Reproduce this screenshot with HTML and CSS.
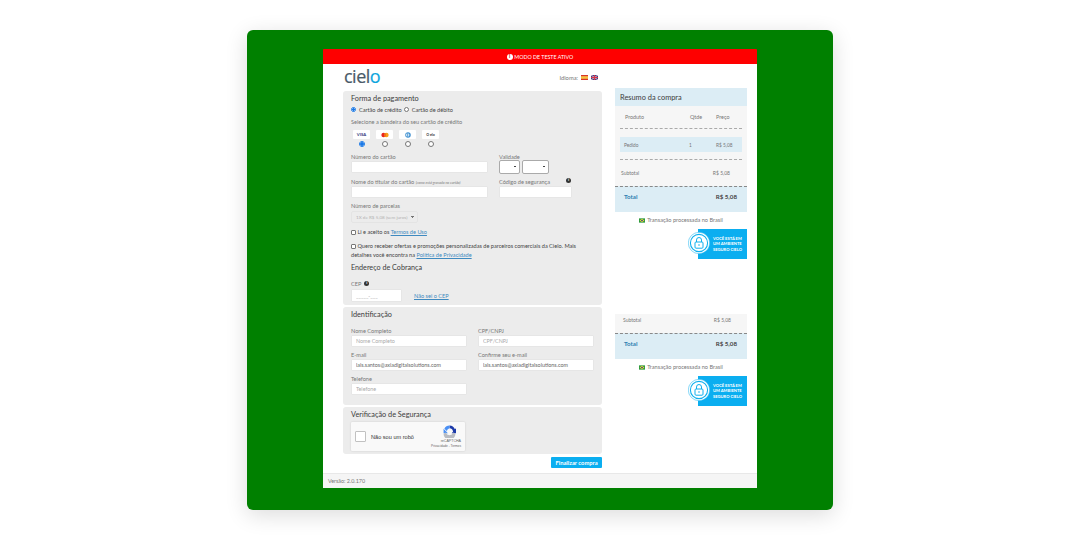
FILE: index.html
```html
<!DOCTYPE html>
<html lang="pt-BR">
<head>
<meta charset="utf-8">
<title>Cielo Checkout</title>
<link rel="stylesheet" href="styles.css">
</head>
<body>
<main class="stage">
  <div class="frame">
    <div class="test-bar"><span class="info-dot white">i</span> MODO DE TESTE ATIVO</div>
    <div class="content">
      <div class="left">
        <header class="top">
          <div class="logo">ciel<span>o</span></div>
          <div class="lang">Idioma:
            <svg class="flag" viewBox="0 0 7 5"><rect width="7" height="5" fill="#d8352a"/><rect y="1.2" width="7" height="2.6" fill="#f5c242"/></svg>
            <svg class="flag" viewBox="0 0 7 5"><rect width="7" height="5" fill="#3a3f85"/><path d="M0 0L7 5M7 0L0 5" stroke="#e6c8d2" stroke-width="1"/><path d="M3.5 0V5M0 2.5H7" stroke="#d8354a" stroke-width="1.2"/></svg>
          </div>
        </header>

        <section class="panel p-pay">
          <h2>Forma de pagamento</h2>
          <div class="pay-type">
            <label><input type="radio" name="t" checked> Cartão de crédito</label>
            <label><input type="radio" name="t"> Cartão de débito</label>
          </div>
          <p class="lbl sel">Selecione a bandeira do seu cartão de crédito</p>
          <div class="brands">
            <label class="brand"><span class="chip"><b class="visa">VISA</b></span><input type="radio" name="b" checked></label>
            <label class="brand"><span class="chip"><svg viewBox="0 0 12 7" class="ico"><circle cx="4.4" cy="3.5" r="2.8" fill="#e8251f"/><circle cx="7.6" cy="3.5" r="2.8" fill="#f79e1b"/><path d="M6 1.2a2.8 2.8 0 010 4.6a2.8 2.8 0 010-4.6z" fill="#f26a1b"/></svg></span><input type="radio" name="b"></label>
            <label class="brand"><span class="chip"><svg viewBox="0 0 12 7" class="ico"><circle cx="6" cy="3.5" r="3.3" fill="#3d8fd0"/><circle cx="5.6" cy="3.5" r="2.1" fill="#d6e8f6"/><rect x="5.2" y="1.3" width=".9" height="4.4" fill="#3d8fd0"/></svg></span><input type="radio" name="b"></label>
            <label class="brand"><span class="chip"><b class="elo">O elo</b></span><input type="radio" name="b"></label>
          </div>

          <div class="card-grid">
            <div class="f-num"><p class="lbl">Número do cartão</p><input class="inp" type="text"></div>
            <div class="f-val"><p class="lbl">Validade</p><div class="sels"><select class="sm"><option></option></select><select class="md"><option></option></select></div></div>
            <div class="f-num"><p class="lbl">Nome do titular do cartão <i>(como está gravado no cartão)</i></p><input class="inp" type="text"></div>
            <div class="f-sec"><p class="lbl between">Código de segurança <span class="info-dot">i</span></p><input class="inp" type="text"></div>
          </div>

          <p class="lbl parc">Número de parcelas</p>
          <select class="parcelas" disabled><option>1X de R$ 5,08 (sem juros)</option></select>
          <label class="check first"><input type="checkbox"> Li e aceito os <a href="#">Termos de Uso</a></label>
          <p class="check second"><input type="checkbox"> Quero receber ofertas e promoções personalizadas de parceiros comerciais da Cielo. Mais detalhes você encontra na <a href="#">Política de Privacidade</a></p>
          <h2 class="addr">Endereço de Cobrança</h2>
          <p class="lbl cep-l">CEP <span class="info-dot">i</span></p>
          <div class="cep-row"><input class="inp cep" type="text" placeholder="_____-___"><a href="#">Não sei o CEP</a></div>
        </section>

        <section class="panel p-id">
          <h2>Identificação</h2>
          <div class="id-grid">
            <div><p class="lbl">Nome Completo</p><input class="inp" placeholder="Nome Completo"></div>
            <div><p class="lbl">CPF/CNPJ</p><input class="inp" placeholder="CPF/CNPJ"></div>
            <div><p class="lbl">E-mail</p><input class="inp" value="lais.santos@axiadigitalsolutions.com"></div>
            <div><p class="lbl">Confirme seu e-mail</p><input class="inp" value="lais.santos@axiadigitalsolutions.com"></div>
            <div><p class="lbl">Telefone</p><input class="inp" placeholder="Telefone"></div>
          </div>
        </section>

        <section class="panel p-sec">
          <h2>Verificação de Segurança</h2>
          <div class="captcha">
            <span class="cap-box"></span>
            <span class="cap-text">Não sou um robô</span>
            <div class="cap-brand">
              <svg viewBox="0 0 24 24" class="cap-ico"><path d="M12 1a11 11 0 0110 7l2-2v9h-8l2.500-2.500A7 7 0 0012 6z" fill="#1c3aa9"/><path d="M12 1A11 11 0 002.500 7L7 11a7 7 0 015-5z" fill="#4a90f5"/><path d="M1 7v8h8l-3-3z" fill="#4a90f5"/><path d="M5 14a7.500 7.500 0 0014 0l4 2a11 11 0 01-22 0z" fill="#b9bcc2"/></svg>
              <span class="cap-name">reCAPTCHA</span>
              <span class="cap-links">Privacidade - Termos</span>
            </div>
          </div>
        </section>

        <div class="actions"><button type="button" class="buy">Finalizar compra</button></div>
      </div>

      <aside class="right">
        <div class="sum-head">Resumo da compra</div>
        <div class="sum-body">
          <div class="tbl-head"><span class="c1">Produto</span><span class="c2">Qtde</span><span class="c3">Preço</span></div>
          <div class="tbl-row"><span class="c1">Pedido</span><span class="c2">1</span><span class="c3">R$ 5,08</span></div>
          <div class="subtotal sub-a"><span>Subtotal</span><span>R$ 5,08</span></div>
        </div>
        <div class="total"><span>Total</span><b>R$ 5,08</b></div>
        <p class="transit"><svg class="br" viewBox="0 0 7 5"><rect width="7" height="5" fill="#2a9a3c"/><path d="M3.5.6L6.300 2.500 3.500 4.400.7 2.500z" fill="#f5d33a"/><circle cx="3.500" cy="2.500" r="1" fill="#27408b"/></svg> Transação processada no Brasil</p>
        <div class="seal">
          <svg class="seal-ring" viewBox="0 0 22 22"><circle cx="11" cy="11" r="10.700" fill="#fff" stroke="#0fb0ee" stroke-width=".5"/><circle cx="11" cy="11" r="8.600" fill="#fff" stroke="#0fb0ee" stroke-width="1.100"/><rect x="7" y="10" width="8" height="6.200" rx="1" fill="none" stroke="#0fb0ee" stroke-width="1"/><path d="M8.500 10V8a2.500 2.500 0 015 0v2" fill="none" stroke="#0fb0ee" stroke-width="1"/><circle cx="11" cy="13" r=".8" fill="#0fb0ee"/></svg>
          <div class="seal-text">VOCÊ ESTÁ EM<br>UM AMBIENTE<br>SEGURO CIELO</div>
        </div>

        <div class="sum-body short"><div class="subtotal"><span>Subtotal</span><span>R$ 5,08</span></div></div>
        <div class="total"><span>Total</span><b>R$ 5,08</b></div>
        <p class="transit"><svg class="br" viewBox="0 0 7 5"><rect width="7" height="5" fill="#2a9a3c"/><path d="M3.5.6L6.300 2.500 3.500 4.400.7 2.500z" fill="#f5d33a"/><circle cx="3.500" cy="2.500" r="1" fill="#27408b"/></svg> Transação processada no Brasil</p>
        <div class="seal">
          <svg class="seal-ring" viewBox="0 0 22 22"><circle cx="11" cy="11" r="10.700" fill="#fff" stroke="#0fb0ee" stroke-width=".5"/><circle cx="11" cy="11" r="8.600" fill="#fff" stroke="#0fb0ee" stroke-width="1.100"/><rect x="7" y="10" width="8" height="6.200" rx="1" fill="none" stroke="#0fb0ee" stroke-width="1"/><path d="M8.500 10V8a2.500 2.500 0 015 0v2" fill="none" stroke="#0fb0ee" stroke-width="1"/><circle cx="11" cy="13" r=".8" fill="#0fb0ee"/></svg>
          <div class="seal-text">VOCÊ ESTÁ EM<br>UM AMBIENTE<br>SEGURO CIELO</div>
        </div>
      </aside>
    </div>
    <footer class="foot">Versão: 2.0.170</footer>
  </div>
</main>
</body>
</html>
```
FILE: styles.css
```css
* { box-sizing: border-box; }
html, body { margin: 0; padding: 0; background: #fff; }
body { width: 1080px; height: 540px; overflow: hidden; font-family: "Lato", "Liberation Sans", sans-serif; color: #555; }
p, h2 { margin: 0; font-weight: 400; }
a { color: #3f8ac0; text-decoration: underline; }

.stage { padding-top: 30px; display: flex; justify-content: center; }
.frame { width: 586px; height: 480px; background: #008000; border-radius: 6px; padding: 19px 76px 22px; box-shadow: 0 5px 22px rgba(0,0,0,.14); display: flex; flex-direction: column; }

.test-bar { height: 15px; background: #fe0000; color: #fff; font-size: 5.3px; display: flex; align-items: center; justify-content: center; gap: 1.5px; flex: none; border-radius: 1px 1px 0 0; }
.info-dot { display: inline-flex; width: 5px; height: 5px; border-radius: 50%; background: #333; color: #fff; font-size: 4.5px; font-weight: 700; align-items: center; justify-content: center; line-height: 1; }
.info-dot.white { background: #fff; color: #c00; width: 6px; height: 6px; font-size: 5px; }

.content { flex: 1; background: #fff; display: flex; padding-left: 20px; padding-right: 10px; gap: 13px; }
.left { width: 259px; display: flex; flex-direction: column; }
.right { width: 132px; padding-top: 24px; display: flex; flex-direction: column; }

.top { height: 27px; display: flex; justify-content: space-between; align-items: flex-start; padding: 3px 4px 0 1px; }
.logo { font-family: "Open Sans", "Liberation Sans", sans-serif; font-size: 18px; line-height: 19px; color: #4a5a68; letter-spacing: -.5px; -webkit-text-stroke: .2px #4a5a68; }
.logo span { color: #0ea5dd; -webkit-text-stroke: .2px #0ea5dd; }
.lang { font-size: 5.8px; color: #777; display: flex; align-items: center; gap: 3px; padding-top: 7px; }
.flag { width: 7px; height: 5px; display: block; }

.panel { background: #ececec; border-radius: 3px; padding: 3px 8px 0; margin-bottom: 2px; }
.panel h2 { font-size: 7.3px; line-height: 10px; color: #3c3c3c; }
.p-pay { height: 214px; }
.p-id { height: 98px; }
.p-sec { height: 47px; margin-bottom: 3px; }

.lbl { font-size: 5.6px; line-height: 7px; color: #777; }
input[type=radio], input[type=checkbox] { appearance: none; margin: 0; width: 5px; height: 5px; background: #fff; border: .7px solid #777; flex: none; }
input[type=radio] { border-radius: 50%; }
input[type=radio]:checked { border-color: #1a78e6; background: radial-gradient(circle, #1a78e6 55%, #fff 62%); }
input[type=checkbox] { border-radius: 1px; }
.pay-type { display: flex; gap: 2px; margin-top: 1px; font-size: 5.6px; line-height: 9px; color: #444; }
.pay-type label { display: flex; align-items: center; gap: 3px; }
.sel { margin-top: 4px; }
.brands { display: flex; gap: 6px; margin: 5px 0 0 2px; }
.brand { width: 17px; display: flex; flex-direction: column; align-items: center; gap: 2px; }
.brand input { width: 6px; height: 6px; }
.chip { width: 17px; height: 9px; background: #fff; border-radius: 1px; display: flex; align-items: center; justify-content: center; }
.ico { width: 10px; height: 6px; }
.visa { font-size: 4.2px; color: #2a2f7a; }
.elo { font-size: 3.6px; color: #333; }

.card-grid { display: grid; grid-template-columns: 137px 1fr; column-gap: 11px; margin-top: 6px; row-gap: 4px; }
.card-grid .lbl { height: 8px; }
.card-grid i { font-size: 3.6px; }
.inp { display: block; width: 100%; height: 12px; border: 1px solid #e6e6e6; background: #fff; border-radius: 1px; padding: 0 4px; font: 5.4px "Lato", sans-serif; color: #666; outline: 0; }
.inp::placeholder { color: #aaa; }
.f-val .sels { display: flex; gap: 2px; margin-top: -1px; }
select { appearance: none; font-size: 5px; border-radius: 2px; padding: 0 0 0 4px; margin: 0; background-color: #fff; background-image: linear-gradient(45deg, transparent 50%, #444 50%), linear-gradient(135deg, #444 50%, transparent 50%); background-size: 2px 2px; background-repeat: no-repeat; background-position: calc(100% - 4px) 50%, calc(100% - 2px) 50%; }
.sm { width: 21px; height: 14px; border: 1px solid #aaa; }
.md { width: 27px; height: 14px; border: 1px solid #aaa; }
.between { display: flex; justify-content: space-between; padding-right: 1px; }
.f-sec { width: 73px; }
.parc { margin-top: 4px; }
.parcelas { display: block; width: 67px; height: 12px; margin-top: 2px; background-color: #ececec; border: 1px solid #e2e2e2; color: #999; font-family: "Lato", sans-serif; font-size: 4.6px; }
.check { font-size: 5.6px; line-height: 9px; color: #444; display: block; }
.check input { vertical-align: -0.5px; }
.first { margin-top: 4px; }
.second { margin-top: 5px; }
.addr { margin-top: 4px; }
.panel .addr { font-size: 7.2px; }
.cep-l { margin-top: 7px; display: flex; align-items: center; gap: 3px; }
.cep-row { display: flex; align-items: center; gap: 12px; margin-top: 2px; font-size: 5.6px; }
.cep { width: 51px; height: 13px; }

.id-grid { display: grid; grid-template-columns: 116px 116px; column-gap: 11px; row-gap: 4px; margin-top: 7px; }
.id-grid .inp { height: 12px; margin-top: 1px; }

.captcha { width: 114px; height: 29px; margin-top: 2px; background: #f9f9f9; border-radius: 1px; box-shadow: 0 0 2px rgba(0,0,0,.15); display: flex; align-items: center; padding: 0 4px 0 4px; }
.cap-box { width: 11px; height: 11px; background: #fff; border: 1px solid #c1c1c1; border-radius: 1px; flex: none; }
.cap-text { font-size: 5.6px; color: #333; margin-left: 5px; font-family: "Liberation Sans", sans-serif; }
.cap-brand { margin-left: auto; display: flex; flex-direction: column; align-items: flex-end; }
.cap-ico { width: 13px; height: 13px; margin: 0 5px 1px 0; }
.cap-name { font-size: 3.6px; line-height: 4.5px; color: #666; font-family: "Liberation Sans", sans-serif; }
.cap-links { font-size: 3.2px; line-height: 4px; color: #666; font-family: "Liberation Sans", sans-serif; white-space: nowrap; }

.actions { display: flex; justify-content: flex-end; }
.buy { width: 51px; height: 11px; padding: 0; border: 0; border-radius: 1px; background: #0baef0; color: #fff; font: 700 5.8px "Lato", sans-serif; }

.sum-head { height: 18px; background: #dcedf5; color: #3c3c3c; font-size: 7.4px; display: flex; align-items: center; padding-left: 5px; flex: none; }
.sum-body { height: 80px; background: #f6f6f6; flex: none; padding: 0 5px; font-size: 5px; color: #777; }
.sum-body.short { height: 19px; margin-top: 55px; padding: 0; }
.tbl-head { height: 23px; display: flex; align-items: center; border-bottom: 1px dashed #aaa; font-size: 5.4px; padding-left: 5px; }
.tbl-head .c1 { width: 65px; }
.tbl-head .c2 { width: 26px; }
.tbl-row { height: 15px; margin-top: 8px; background: #dcedf5; display: flex; align-items: center; padding-left: 4px; font-size: 4.8px; }
.tbl-row .c1 { width: 65px; }
.tbl-row .c2 { width: 27px; }
.subtotal { display: flex; justify-content: space-between; align-items: center; }
.sub-a { margin: 7px 0 0; height: 26px; border-top: 1px dashed #aaa; padding: 0 12px 0 1px; }
.short .subtotal { padding: 0 16px 0 8px; height: 11px; }
.total { height: 26px; background: #dcedf5; border-top: 1px dashed #888; flex: none; display: flex; justify-content: space-between; align-items: center; padding: 0 10px 6px 9px; font-size: 6.2px; }
.total span { color: #2f7fb0; font-weight: 700; }
.total b { color: #444; }
.transit { margin-top: 5px; height: 6px; display: flex; align-items: center; justify-content: center; gap: 2px; font-size: 5.6px; line-height: 6px; color: #777; white-space: nowrap; }
.br { width: 6px; height: 5px; flex: none; }
.seal { margin: 6px 0 0 83px; width: 49px; height: 30px; background: #0baef0; position: relative; padding: 6.5px 0 0 15px; flex: none; }
.seal-ring { position: absolute; left: -10px; top: 3px; width: 22px; height: 22px; }
.seal-text { color: #fff; font-size: 4.1px; font-weight: 700; line-height: 5.5px; white-space: nowrap; }

.foot { height: 15px; flex: none; background: #f5f5f5; border-top: 1px solid #e8e8e8; font-size: 5.4px; color: #777; display: flex; align-items: center; padding-left: 5px; }
```
